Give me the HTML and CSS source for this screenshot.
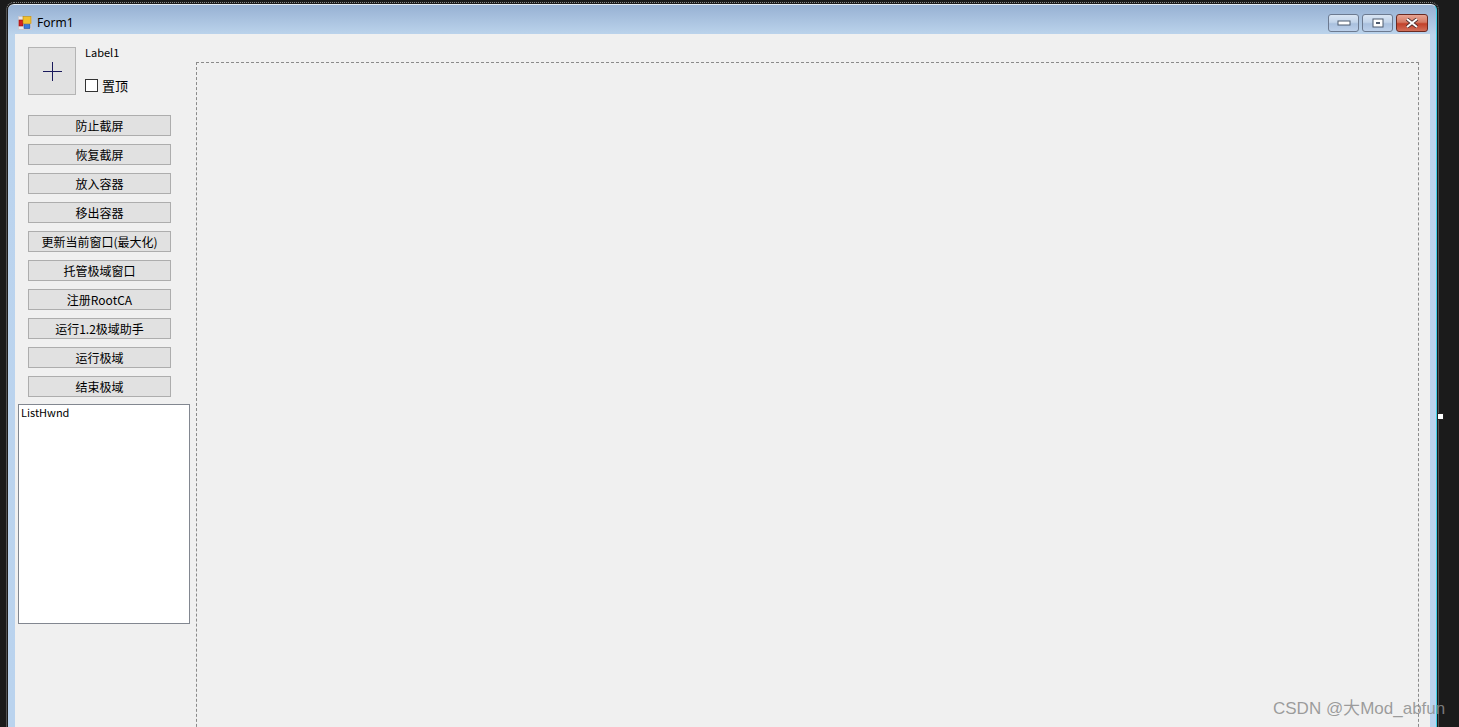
FILE: index.html
```html
<!DOCTYPE html>
<html lang="zh-CN">
<head>
    <meta charset="UTF-8">
    <title>Form1</title>
    <link rel="stylesheet" href="styles.css">
</head>
<body>
    <div class="window">
        <div class="titlebar">
            <svg class="app-icon" width="14" height="14" viewBox="0 0 14 14">
                <rect x="0.5" y="0.5" width="13" height="13" fill="#e8e8ec" stroke="#c9c9d2"/>
                <rect x="1" y="4" width="4" height="6" fill="#d42020" stroke="#8a1010" stroke-width="0.6"/>
                <rect x="5" y="0.5" width="8" height="7" fill="#f2c12e" stroke="#b88a10" stroke-width="0.6"/>
                <rect x="6" y="8.5" width="6" height="4" fill="#3b7ad8" stroke="#1f4f9a" stroke-width="0.6"/>
            </svg>
            <span class="title">Form1</span>
            <div class="caption-buttons">
                <div class="cap-btn">
                    <svg width="14" height="6" viewBox="0 0 14 6"><rect x="1" y="1" width="12" height="4" fill="#fff" stroke="#4d5a6e"/></svg>
                </div>
                <div class="cap-btn">
                    <svg width="12" height="10" viewBox="0 0 12 10"><rect x="1" y="1" width="10" height="8" fill="#fff" stroke="#4d5a6e"/><rect x="4" y="4" width="4" height="2" fill="#4d5a6e"/></svg>
                </div>
                <div class="cap-btn close">
                    <svg width="14" height="10" viewBox="0 0 14 10"><path d="M2 1 L12 9 M12 1 L2 9" stroke="#4a2a2a" stroke-width="3.6"/><path d="M2 1 L12 9 M12 1 L2 9" stroke="#fff" stroke-width="2"/></svg>
                </div>
            </div>
        </div>
        <div class="client">
            <div class="sidebar">
                <div class="top-row">
                    <div class="pic-button">
                        <svg width="19" height="19" viewBox="0 0 19 19"><path d="M9.5 0 V19 M0 9.5 H19" stroke="#1a1a5c" stroke-width="1"/></svg>
                    </div>
                    <div class="top-info">
                        <div class="label">Label1</div>
                        <label class="check"><span class="box"></span>置顶</label>
                    </div>
                </div>
                <div class="buttons">
                    <div class="btn">防止截屏</div>
                    <div class="btn">恢复截屏</div>
                    <div class="btn">放入容器</div>
                    <div class="btn">移出容器</div>
                    <div class="btn">更新当前窗口(最大化)</div>
                    <div class="btn">托管极域窗口</div>
                    <div class="btn">注册RootCA</div>
                    <div class="btn">运行1.2极域助手</div>
                    <div class="btn">运行极域</div>
                    <div class="btn">结束极域</div>
                </div>
                <div class="listbox">ListHwnd</div>
            </div>
            <div class="panel"></div>
        </div>
    </div>
    <div class="handle"></div>
    <div class="watermark">CSDN @大Mod_abfun</div>
</body>
</html>
```

FILE: styles.css
```css
body {
    margin: 0;
    width: 1459px;
    height: 727px;
    overflow: hidden;
    background: #1b1b1b;
    position: relative;
    font-family: "Noto Sans CJK SC", sans-serif;
}
.window {
    margin-left: 8px;
    margin-top: 4px;
    width: 1429px;
    height: 740px;
    border-right: 1px solid #3fd2e6;
    border-top: 1px solid #e4ecf6;
    border-radius: 6px 6px 0 0;
    background: linear-gradient(to bottom, #97b1d3 0, #bcd4ec 30px, #bcd4ee 80px, #bad3ee 100%);
    outline: 1px dotted #8a8a8a;
    outline-offset: 1px;
    display: flex;
    flex-direction: column;
    box-sizing: border-box;
    padding: 0 6px 0 7px;
}
.titlebar {
    height: 29px;
    display: flex;
    align-items: flex-start;
    flex-shrink: 0;
}
.app-icon {
    margin-top: 11px;
    margin-left: 3px;
}
.title {
    margin-left: 5px;
    margin-top: 10px;
    font-family: "Noto Sans", sans-serif;
    font-size: 12px;
    line-height: 16px;
    color: #000;
}
.caption-buttons {
    margin-left: auto;
    margin-top: 9px;
    margin-right: 2px;
    display: flex;
    gap: 3px;
}
.cap-btn {
    width: 31px;
    height: 18px;
    box-sizing: border-box;
    border: 1px solid #6c7a90;
    border-radius: 3px;
    background: linear-gradient(to bottom, #d9e5f3 0, #c2d4ea 45%, #a9c0de 55%, #bcd0ea 100%);
    display: flex;
    align-items: center;
    justify-content: center;
}
.cap-btn.close {
    width: 32px;
    border-color: #6a2a22;
    background: linear-gradient(to bottom, #e8a493 0, #d47a64 45%, #c2412a 55%, #d2705a 100%);
}
.client {
    flex: 1;
    background: #f0f0f0;
    display: flex;
    align-items: flex-start;
}
.sidebar {
    width: 173px;
    margin-left: 3px;
    display: flex;
    flex-direction: column;
}
.top-row {
    display: flex;
    margin-left: 10px;
    margin-top: 13px;
}
.pic-button {
    width: 48px;
    height: 48px;
    box-sizing: border-box;
    border: 1px solid #b4b4b4;
    background: #e1e1e1;
    display: flex;
    align-items: center;
    justify-content: center;
}
.top-info {
    margin-left: 9px;
    display: flex;
    flex-direction: column;
}
.label {
    font-size: 11px;
    line-height: 12px;
    margin-top: -1px;
    color: #000;
}
.check {
    display: flex;
    align-items: center;
    margin-top: 20px;
    font-size: 13px;
    line-height: 15px;
    color: #000;
}
.box {
    width: 13px;
    height: 13px;
    box-sizing: border-box;
    border: 1px solid #333;
    background: #fff;
    margin-right: 4px;
}
.buttons {
    margin-top: 20px;
    margin-left: 10px;
    display: flex;
    flex-direction: column;
    gap: 8px;
}
.btn {
    width: 143px;
    height: 21px;
    box-sizing: border-box;
    border: 1px solid #adadad;
    background: #e1e1e1;
    font-size: 12px;
    line-height: 19px;
    text-align: center;
    color: #000;
}
.listbox {
    margin-top: 7px;
    width: 172px;
    height: 220px;
    box-sizing: border-box;
    border: 1px solid #828790;
    background: #fff;
    padding: 1px 2px;
    font-size: 11px;
    line-height: 13px;
    color: #000;
}
.panel {
    margin-top: 28px;
    margin-left: 5px;
    width: 1223px;
    height: 700px;
    box-sizing: border-box;
    border: 1px dashed #8a8a8a;
}
.handle {
    position: absolute;
    left: 1437px;
    top: 413px;
    width: 7px;
    height: 7px;
    box-sizing: border-box;
    border: 1px solid #222;
    background: #fff;
}
.watermark {
    position: absolute;
    left: 1273px;
    top: 697px;
    font-family: "Liberation Sans", sans-serif;
    font-size: 17px;
    line-height: 24px;
    color: rgba(140, 140, 140, 0.85);
    white-space: nowrap;
}
```
